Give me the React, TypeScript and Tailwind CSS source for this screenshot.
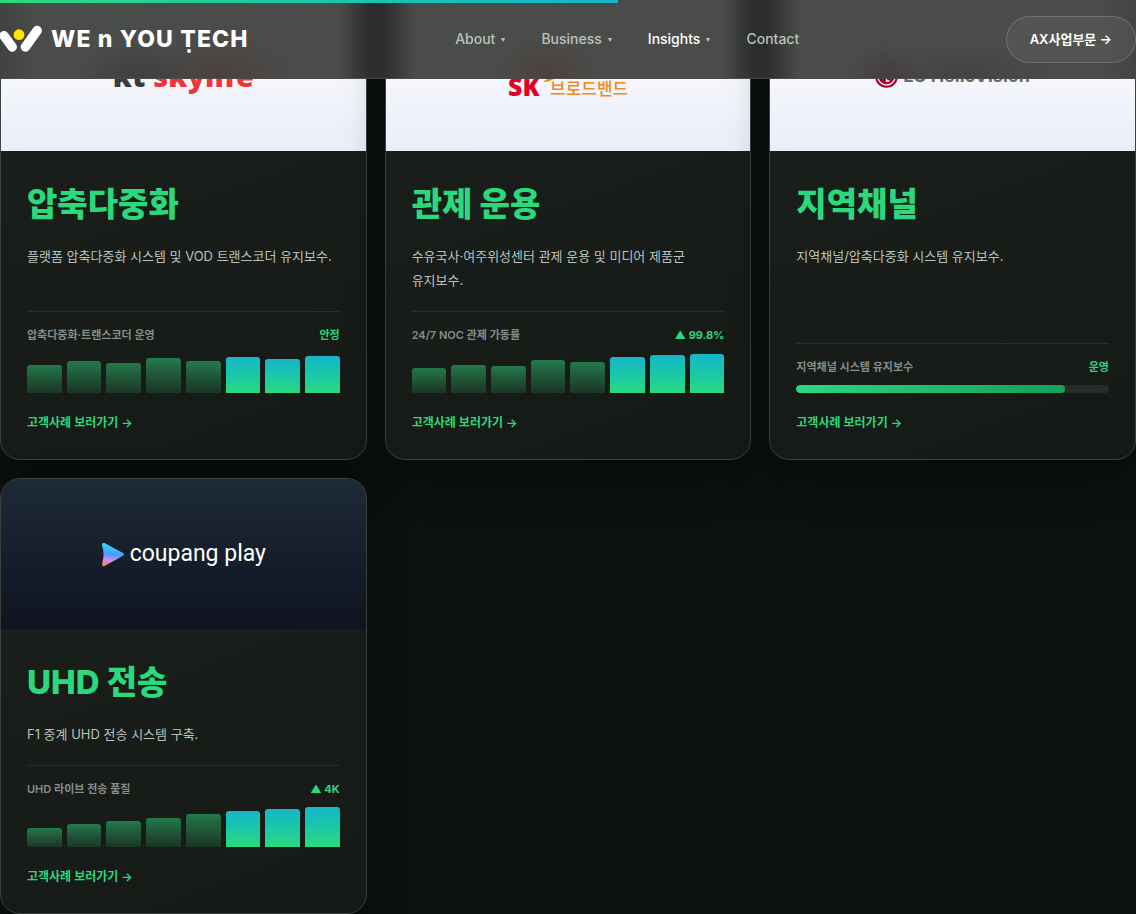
import type { ReactNode } from "react";

interface NavItem {
  label: string;
  menu?: boolean;
  active?: boolean;
}

interface CaseCard {
  title: string;
  description: string;
  metric: string;
  value: string;
  rising?: boolean;
  bars?: number[];
  progress?: number;
  dark?: boolean;
  logo: ReactNode;
}

const NAV: NavItem[] = [
  { label: "About", menu: true },
  { label: "Business", menu: true },
  { label: "Insights", menu: true, active: true },
  { label: "Contact" },
];

const CARDS: CaseCard[] = [
  {
    title: "압축다중화",
    description: "플랫폼 압축다중화 시스템 및 VOD 트랜스코더 유지보수.",
    metric: "압축다중화·트랜스코더 운영",
    value: "안정",
    bars: [70, 80, 75, 88, 80, 90, 85, 93],
    logo: <SkylifeLogo />,
  },
  {
    title: "관제 운용",
    description: "수유국사·여주위성센터 관제 운용 및 미디어 제품군 유지보수.",
    metric: "24/7 NOC 관제 가동률",
    value: "99.8%",
    rising: true,
    bars: [63, 70, 68, 83, 78, 90, 95, 98],
    logo: <BroadbandLogo />,
  },
  {
    title: "지역채널",
    description: "지역채널/압축다중화 시스템 유지보수.",
    metric: "지역채널 시스템 유지보수",
    value: "운영",
    progress: 86,
    logo: <HelloVisionLogo />,
  },
  {
    title: "UHD 전송",
    description: "F1 중계 UHD 전송 시스템 구축.",
    metric: "UHD 라이브 전송 품질",
    value: "4K",
    rising: true,
    bars: [48, 58, 65, 73, 83, 90, 95, 100],
    dark: true,
    logo: <CoupangPlayLogo />,
  },
];

function SkylifeLogo() {
  return (
    <div className="flex gap-2 font-['Open_Sans','Noto_Sans',sans-serif] text-[29px] leading-10 font-extrabold">
      <span className="text-[#3b3b3d]">kt</span>
      <span className="text-[#f0353a]">skylife</span>
    </div>
  );
}

function BroadbandLogo() {
  return (
    <svg className="h-14 w-[122px]" viewBox="0 0 122 56" role="img" aria-label="SK 브로드밴드">
      <path d="M34 26C40 21 44 12 52 9C51 15 47 21 42 25Z" fill="#e4002b" />
      <path d="M36 34C43 30 48 23 58 18C55 27 46 33 38 34Z" fill="#f08300" />
      <text x="1" y="48" fontSize="25" fontWeight="800" fill="#e4002b" fontFamily="Open Sans, sans-serif">
        SK
      </text>
      <text x="43" y="47" fontSize="17" fontWeight="500" fill="#f08a1c" fontFamily="Noto Sans CJK KR, sans-serif">
        브로드밴드
      </text>
    </svg>
  );
}

function HelloVisionLogo() {
  return (
    <div className="flex items-center gap-[5px]">
      <svg className="size-[23px]" viewBox="0 0 23 23" aria-hidden="true">
        <circle cx="11.5" cy="11.5" r="11.3" fill="#a50034" />
        <circle cx="11.5" cy="11.5" r="8.6" fill="none" stroke="#fff" strokeWidth="1.3" />
        <path d="M11.5 8v8h3M14 11.5h6" fill="none" stroke="#fff" strokeWidth="1.3" />
      </svg>
      <span className="font-['Inter',sans-serif] text-[18px] leading-6 font-bold text-[#6b6b6b]">LG HelloVision</span>
    </div>
  );
}

function CoupangPlayLogo() {
  return (
    <div className="flex items-center gap-[5px]">
      <svg className="h-[25px] w-6" viewBox="0 0 24 25" aria-hidden="true">
        <defs>
          <linearGradient id="play" x1="0.3" y1="0" x2="0.15" y2="1">
            <stop offset="0" stopColor="#2fe3f2" />
            <stop offset="0.45" stopColor="#4a9bff" />
            <stop offset="0.72" stopColor="#d08cf5" />
            <stop offset="1" stopColor="#ff7a45" />
          </linearGradient>
        </defs>
        <path
          d="M3.4 1.1L22 10.9Q24 12.3 22 13.8L3.6 23.9Q1 24.8 1 22.2Q4 12.5 1 3Q.8.4 3.4 1.1Z"
          fill="url(#play)"
        />
      </svg>
      <span className="font-['Roboto',sans-serif] text-[23px] leading-8 text-white">coupang play</span>
    </div>
  );
}

function Brand() {
  return (
    <a href="#" className="flex items-center gap-2" aria-label="WE n YOU TECH">
      <svg className="h-7 w-[43px]" viewBox="0 0 43 28" fill="none" aria-hidden="true">
        <g stroke="#fff" strokeWidth="9.4" strokeLinecap="round">
          <path d="M4 10.7L12.2 22" />
          <path d="M37.2 5.5L25.4 22" />
        </g>
        <circle cx="19" cy="9.7" r="5.4" fill="#ffe500" />
      </svg>
      <span className="font-['Inter',sans-serif] text-[23px] leading-7 font-extrabold tracking-wider whitespace-nowrap text-white">
        WE n YOU{" "}
        <span className="relative">
          T<span className="absolute bottom-0 left-1/2 size-1 -translate-x-1/2 rounded-full bg-white" />
        </span>
        ECH
      </span>
    </a>
  );
}

// Frosted glass tint: dark over the column gaps, a faint glow over each logo.
function Frost() {
  return (
    <div className="absolute inset-0 -z-10 bg-[#4a4c4a] bg-[radial-gradient(60px_36px_at_12%_100%,#403f3e_0%,transparent_100%),radial-gradient(80px_40px_at_19%_100%,#4c403e_0%,transparent_100%),radial-gradient(50px_40px_at_48%_100%,#4e403a_0%,transparent_100%),radial-gradient(36px_34px_at_78%_100%,#463b3d_0%,transparent_100%),radial-gradient(90px_34px_at_85%_100%,#424342_0%,transparent_100%),linear-gradient(to_right,#414342_0%,transparent_3%,transparent_29.8%,#2b2d2c_32.6%,#2b2d2c_33.6%,transparent_36.6%,transparent_63.6%,#2b2d2c_66.4%,#2b2d2c_67.4%,transparent_70.4%,transparent_97%,#434544_100%)]" />
  );
}

function Header() {
  return (
    <header className="fixed inset-x-0 top-0 z-10 border-b border-[#4b4d4c]">
      <Frost />
      <div className="absolute top-0 left-0 h-[3px] w-[54.4%] bg-linear-to-r from-[#2bd97c] to-[#16b5c9]" />
      <div className="flex h-[78px] items-center justify-between">
        <Brand />
        <nav className="flex gap-9 text-[14px] leading-6 font-medium">
          {NAV.map((item) => (
            <a
              key={item.label}
              href="#"
              className={`flex items-center gap-[6px] ${item.active ? "text-white" : "text-[#b9c1bd]"}`}
            >
              {item.label}
              {item.menu && <span className="text-[8px] text-[#b9c1bd]">▾</span>}
            </a>
          ))}
        </nav>
        <a
          href="#"
          className="rounded-full border border-white/16 bg-white/5 px-[23px] py-3 text-[13px] leading-[21px] font-semibold text-white"
        >
          AX사업부문 →
        </a>
      </div>
    </header>
  );
}

function Bars({ values }: { values: number[] }) {
  return (
    <div className="flex h-10 items-end gap-[5px]">
      {values.map((value, i) => (
        <div
          key={i}
          className={`flex-1 rounded-t-[3px] bg-linear-to-b ${
            i >= 5 ? "from-[#16b5c9] to-[#2bd97c]" : "from-[#227a4a] to-[#1a3526]"
          }`}
          style={{ height: `${value}%` }}
        />
      ))}
    </div>
  );
}

function Progress({ value }: { value: number }) {
  return (
    <div className="h-2 overflow-hidden rounded-full bg-white/8">
      <div className="h-full rounded-full bg-linear-to-r from-[#2bd97c] to-[#16a05a]" style={{ width: `${value}%` }} />
    </div>
  );
}

function Card({ card }: { card: CaseCard }) {
  return (
    <article className="flex flex-col overflow-hidden rounded-[20px] border border-[#3c403d] bg-linear-160 from-[#1b201c] to-[#151a17] shadow-[0_20px_40px_rgba(0,0,0,0.35)]">
      <div
        className={`flex h-[150px] items-center justify-center bg-linear-to-b ${
          card.dark ? "from-[#1e2a38] to-[#0f1420]" : "from-white to-[#eaeef8]"
        }`}
      >
        {card.logo}
      </div>
      <div className="flex flex-1 flex-col px-[26px] pt-7 pb-[26px]">
        <h3 className="mb-[14px] text-[33px] leading-[51px] font-extrabold text-[#2bd97c]">{card.title}</h3>
        <p className="mb-[19px] text-[13px] leading-6 text-[#b9c1bd]">{card.description}</p>
        <div className="mt-auto border-t border-white/8 pt-4">
          <div className="mb-[10px] flex justify-between text-[11px] leading-[15px]">
            <span className="font-semibold text-[#868d89]">{card.metric}</span>
            <span className="font-bold text-[#2bd97c]">
              {card.rising && "▲ "}
              {card.value}
            </span>
          </div>
          {card.bars && <Bars values={card.bars} />}
          {card.progress && <Progress value={card.progress} />}
        </div>
        <a href="#" className="mt-5 self-start text-[12px] leading-5 font-semibold text-[#2bd97c]">
          고객사례 보러가기 →
        </a>
      </div>
    </article>
  );
}

export default function App() {
  return (
    <div className="min-h-screen bg-[#0d1110] font-['Inter','Noto_Sans_CJK_KR',sans-serif] break-keep">
      <Header />
      <main className="grid grid-cols-3 gap-[18px]">
        {CARDS.map((card) => (
          <Card key={card.title} card={card} />
        ))}
      </main>
    </div>
  );
}
